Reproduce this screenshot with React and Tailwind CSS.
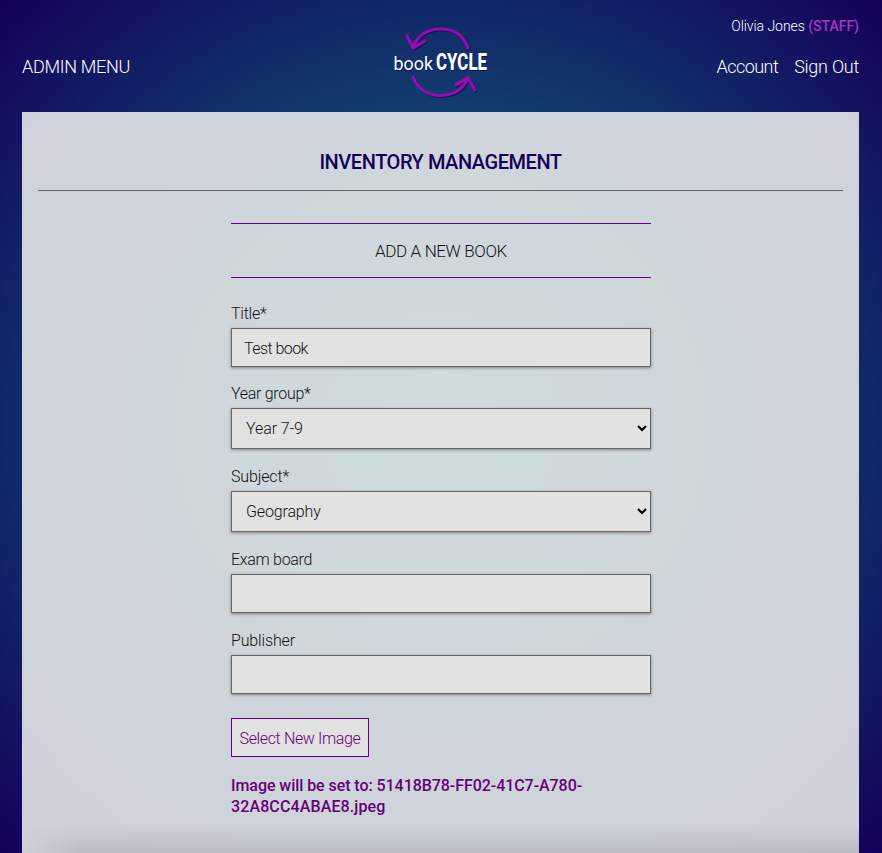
import React from "react";

function Logo() {
  return (
    <svg width="120" height="95" viewBox="0 0 120 95" className="block overflow-visible">
      <g fill="none" strokeLinecap="round" strokeLinejoin="round" strokeWidth="3.2">
        <g stroke="#0d1550" transform="translate(1 1)">
          <path d="M88 33C83 19 73 14 61 14C48 14 38 20 33 32" />
          <path d="M27 21L33.500 33L45 26" />
          <path d="M33 62C38 74 48 80.500 60 80.500C73 80.500 83 75 88 63" />
          <path d="M76 69.500L88 63L95 75" />
        </g>
        <g stroke="#970bb1">
          <path d="M88 33C83 19 73 14 61 14C48 14 38 20 33 32" />
          <path d="M27 21L33.500 33L45 26" />
          <path d="M33 62C38 74 48 80.500 60 80.500C73 80.500 83 75 88 63" />
          <path d="M76 69.500L88 63L95 75" />
        </g>
      </g>
      <g fill="#fff" className="[text-shadow:1px_1px_0_#0b1258]">
        <text x="13.500" y="55" fontSize="18.500" fontWeight="400" textLength="39.500" lengthAdjust="spacingAndGlyphs">book</text>
        <text x="56" y="55" fontSize="24.500" fontWeight="800" textLength="51" lengthAdjust="spacingAndGlyphs">CYCLE</text>
      </g>
    </svg>
  );
}

const box =
  "flex w-full items-center border border-[#66666a] bg-[#e2e2e2] shadow-[0_1px_3px_rgba(0,0,0,0.4)]";

function Field({ label, value, className, labelClass = "", valueClass = "", select = false }) {
  return (
    <div className={className}>
      <div className="h-6 whitespace-nowrap leading-5">
        <span className={labelClass}>{label}</span>
      </div>
      <div className={box + (select ? " h-[41px] justify-between pl-[14px] pr-[3px] pt-px" : " h-[39px] px-3 pt-0.5")}>
        <span className={valueClass}>{value}</span>
        {select && (
          <svg width="10" height="8" viewBox="0 0 10 8" className="block">
            <path d="M1 1L5 5L9 1" fill="none" stroke="#000" strokeWidth="2.200" />
          </svg>
        )}
      </div>
    </div>
  );
}

export default function App() {
  return (
    <div className="relative flex h-[853px] w-[882px] flex-col overflow-hidden bg-[radial-gradient(ellipse_at_center,#0c8287_0%,#14005a_100%)] px-[22px] font-['Roboto',sans-serif] text-base font-light text-[#111]">
      <header className="grid h-28 shrink-0 grid-cols-[358px_120px_359px] text-white">
        <div className="pt-[55px] text-lg leading-6 tracking-[-0.3px]">ADMIN MENU</div>
        <div className="pt-[15px]">
          <Logo />
        </div>
        <div className="flex flex-col items-end pt-4">
          <div className="whitespace-nowrap text-sm leading-5">
            <span className="tracking-[-0.05px]">Olivia Jones</span> <span className="font-medium text-[#aa35c4]">(STAFF)</span>
          </div>
          <nav className="mt-[19px] flex gap-4 text-lg leading-6">
            <span className="tracking-[-0.55px]">Account</span>
            <span className="tracking-[-0.25px]">Sign Out</span>
          </nav>
        </div>
      </header>

      <main className="h-[741px] w-[837px] bg-[rgba(226,229,230,0.91)] px-4">
        <h1 className="h-[79px] border-b border-[#66666a] pt-[38px] text-center text-xl font-medium leading-6 text-[#14005a]">
          <span className="tracking-[-0.45px]">INVENTORY MANAGEMENT</span>
        </h1>
        <div className="ml-[193px] w-[420px] pt-8">
          <h2 className="flex h-[55px] items-center justify-center border-y border-[#6a0080] pt-[3px] text-[17px]">
            <span className="tracking-[-0.38px]">ADD A NEW BOOK</span>
          </h2>
          <Field className="mt-[26px]" label="Title*" value="Test book" labelClass="tracking-[-0.25px]" valueClass="tracking-[-0.55px]" />
          <Field className="mt-[17px]" label="Year group*" value="Year 7-9" labelClass="tracking-[-0.3px]" valueClass="tracking-[-0.1px]" select />
          <Field className="mt-[18px]" label="Subject*" value="Geography" labelClass="tracking-[-0.15px]" valueClass="tracking-[-0.15px]" select />
          <Field className="mt-[18px]" label="Exam board" value="" labelClass="tracking-[-0.3px]" />
          <Field className="mt-[18px]" label="Publisher" value="" labelClass="tracking-[-0.15px]" />
          <button className="mt-6 block h-[39px] w-[138px] whitespace-nowrap border border-[#6a0080] bg-[#e2e2e2] pt-[3px] text-[#650078]">
            <span className="tracking-[-0.37px]">Select New Image</span>
          </button>
          <p className="mt-[18px] font-medium leading-[21px] text-[#650078]">
            <span className="tracking-[-0.06px]">Image will be set to: 51418B78-FF02-41C7-A780-</span>
            <br />
            <span className="tracking-[0.12px]">32A8CC4ABAE8.jpeg</span>
          </p>
        </div>
      </main>
      <div className="absolute bottom-0 left-[22px] h-7 w-[837px] bg-linear-to-t from-black/10 to-transparent [mask-image:linear-gradient(to_right,transparent,black_60px)]" />
    </div>
  );
}
